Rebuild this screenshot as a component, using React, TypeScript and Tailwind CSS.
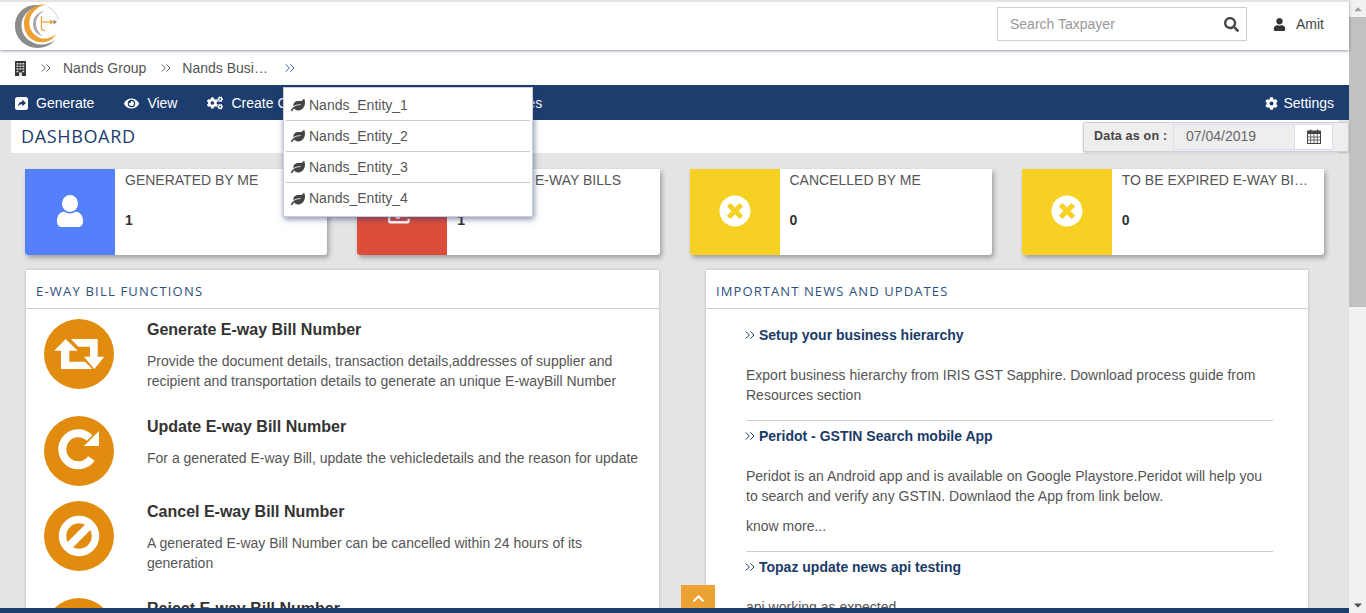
import { FaEye, FaCogs, FaCog, FaUser, FaLeaf, FaSearch, FaTimesCircle, FaChevronUp, FaCaretUp, FaCaretDown, FaRegShareSquare } from "react-icons/fa";
import { ChevronsRight } from "lucide-react";
import type { ReactNode } from "react";

function Logo() {
  return (
    <svg width="46" height="46" viewBox="0 0 46 46" className="block">
      <path d="M27 2.5 C13 0 1 9 1 23 C1 37 14 47 28 44.5 C34 43.5 38 40.5 41 37 C35 41.5 27 43 20 40 C10 36 6 27 8 18 C10 10 18 4 27 2.5Z" fill="#8c8c8c" />
      <path d="M32 1.5 C20 1 10 9 10 21 C10 33 20 41 31 39 C36 38 40 35 42 31 C37 35.5 30 37 24 34 C17 30 14 23 16 15 C18 8 25 3 32 1.5Z" fill="#eea033" />
      <path d="M30 8 C24 9 19 14 19 21 C19 27 23 31.5 28 33 C24 29 22 25 22 21 C22 15 25 11 30 8Z" fill="#a9a9a9" />
      <path d="M34 4 C39 6 43 11 44 17" fill="none" stroke="#cfcfcf" strokeWidth="1" />
      <path d="M27.5 13 V26 C27.5 27 29 27.5 31 27.5" fill="none" stroke="#eea033" strokeWidth="1.2" />
      <path d="M27.5 19 H37" fill="none" stroke="#eea033" strokeWidth="1.2" />
      <path d="M36 16.5 L40 19 L36 21.5Z" fill="#eea033" />
      <path d="M39.5 16.5 L43 19 L39.5 21.5Z" fill="#8c8c8c" />
    </svg>
  );
}

function BuildingIcon() {
  return (
    <svg width="11" height="15" viewBox="0 0 11 15" className="block shrink-0">
      <rect x="0" y="0" width="11" height="15" rx="0.5" fill="#333" />
      {[2, 4.6, 7.2].map((y) =>
        [1.5, 4.4, 7.3].map((x) => <rect key={`${x}-${y}`} x={x} y={y} width="2" height="1.5" fill="#ddd" />)
      )}
      <rect x="1.5" y="9.8" width="2" height="1.5" fill="#ddd" />
      <rect x="7.3" y="9.8" width="2" height="1.5" fill="#ddd" />
      <rect x="4" y="11.5" width="3" height="3.5" fill="#ddd" />
    </svg>
  );
}

function ShareSolid() {
  return (
    <svg width="13" height="13" viewBox="0 0 13 13" className="block shrink-0">
      <rect width="13" height="13" rx="2.5" fill="#fff" />
      <path d="M7.3 2.6 L11 6 L7.3 9.2 V7.3 C5.3 7.2 4 7.8 3 9.8 C3 6.8 4.6 4.8 7.3 4.6Z" fill="#1c3d6e" />
    </svg>
  );
}

function CalendarIcon() {
  return (
    <svg width="14" height="15" viewBox="0 0 14 15" className="block">
      <rect x="0.5" y="2" width="13" height="12.5" fill="none" stroke="#444" />
      <rect x="0.5" y="2" width="13" height="3" fill="#444" />
      <path d="M3.5 0.5 V3 M10.5 0.5 V3" stroke="#444" strokeWidth="1.4" />
      <path d="M0.5 8 H13.5 M0.5 11 H13.5 M3.7 5 V14.5 M7 5 V14.5 M10.3 5 V14.5" stroke="#444" strokeWidth="0.8" />
    </svg>
  );
}

function UserBig() {
  return (
    <svg width="26" height="32" viewBox="0 0 26 32" className="block">
      <ellipse cx="13" cy="8.5" rx="8" ry="8.5" fill="#fff" />
      <path d="M0 26 C0 20 3 17.5 7 16.5 C10.5 19 15.5 19 19 16.5 C23 17.5 26 20 26 26 C26 30 24 32 21 32 H5 C2 32 0 30 0 26Z" fill="#fff" />
    </svg>
  );
}

function RetweetIcon() {
  return (
    <svg width="70" height="70" viewBox="0 0 70 70" className="block">
      <path d="M21.7 20 L33.7 31.7 H25.3 V42.7 H41 L48.3 50 H17 V31.7 H10.3Z" fill="#fff" />
      <path d="M27 20 H53.7 V37.7 H60.3 L50.3 50 L40 37.7 H46 V27.7 H34.3Z" fill="#fff" />
    </svg>
  );
}

function RepeatIcon() {
  return (
    <svg width="70" height="70" viewBox="0 0 70 70" className="block">
      <path d="M45.6 22 A16 16 0 1 0 47.4 42.5" fill="none" stroke="#fff" strokeWidth="8" />
      <path d="M55 15 V30 H40Z" fill="#fff" />
    </svg>
  );
}

function BanIcon() {
  return (
    <svg width="70" height="70" viewBox="0 0 70 70" className="block">
      <circle cx="35" cy="35" r="16.5" fill="none" stroke="#fff" strokeWidth="7.5" />
      <path d="M23 47 L47 23" stroke="#fff" strokeWidth="7.5" />
    </svg>
  );
}

function Stat({ color, icon, title, value }: { color: string; icon: ReactNode; title: string; value: string }) {
  return (
    <div className="flex h-[86px] min-w-0 rounded-b-[3px] bg-white shadow-[2px_3px_5px_rgba(0,0,0,0.3)]">
      <div className={`flex w-[90px] shrink-0 items-center justify-center rounded-bl-[3px] pb-[3px] ${color}`}>{icon}</div>
      <div className="min-w-0 flex-1 pl-[10px] pr-[16px]">
        <div className="mt-[3px] truncate text-[14px] leading-[16px] text-[#555]">{title}</div>
        <div className="mt-[25px] text-[14px] font-bold leading-[14px] text-[#333]">{value}</div>
      </div>
    </div>
  );
}

function Fn({ icon, title, children, className }: { icon: ReactNode; title: string; children: ReactNode; className: string }) {
  return (
    <div className={`flex ${className}`}>
      <div className="ml-[18px] flex h-[70px] w-[70px] shrink-0 items-center justify-center rounded-full bg-[#e18c0e] text-white">{icon}</div>
      <div className="ml-[33px] min-w-0 flex-1">
        <div className="mt-[1px] text-[16px] font-bold leading-[20px] text-[#333]">{title}</div>
        <p className="mt-[11px] text-[14px] leading-[20px] text-[#555]">{children}</p>
      </div>
    </div>
  );
}

function News({ title, children }: { title: string; children: ReactNode }) {
  return (
    <div>
      <div className="flex items-center gap-[1px] text-[14px] font-bold leading-[20px] text-[#1a3a67]">
        <ChevronsRight size={16} strokeWidth={1.5} className="ml-[-4px] shrink-0 text-[#1c3d6e]" />
        <span>{title}</span>
      </div>
      <div className="mt-[20px] text-[14px] leading-[20px] text-[#555]">{children}</div>
    </div>
  );
}

const entities = ["Nands_Entity_1", "Nands_Entity_2", "Nands_Entity_3", "Nands_Entity_4"];

export default function App() {
  return (
    <div className="flex h-[613px] w-full overflow-hidden bg-white text-[#333]" style={{ fontFamily: '"Liberation Sans", Arial, sans-serif' }}>
      <div className="relative min-w-0 flex-1 bg-[#e4e4e4]">
        <header className="relative z-[5] flex h-[50px] items-center border-t-2 border-[#e3e3e3] bg-white pb-[4px] pl-[14px] shadow-[0_1px_3px_rgba(60,70,100,0.55)]">
          <div className="mt-[4px]"><Logo /></div>
          <div className="ml-auto flex h-[34px] w-[250px] items-center border border-[#ccd1d9] pl-[12px] pr-[7px]">
            <span className="flex-1 text-[14px] text-[#999]">Search Taxpayer</span>
            <FaSearch className="text-[15px] text-[#444]" />
          </div>
          <div className="ml-[26px] mr-[25px] flex items-center gap-[10px] text-[14px] text-[#444]">
            <FaUser className="text-[13px] text-[#333]" />
            <span>Amit</span>
          </div>
        </header>

        <div className="relative flex h-[35px] items-center bg-white pl-[15px] pt-[1px] text-[14px] text-[#555]">
          <BuildingIcon />
          <ChevronsRight size={16} strokeWidth={1.5} className="ml-[12px] shrink-0 text-[#666]" />
          <span className="ml-[9px]">Nands Group</span>
          <ChevronsRight size={16} strokeWidth={1.5} className="ml-[12px] shrink-0 text-[#666]" />
          <span className="ml-[8px] w-[87px] truncate">Nands Business</span>
          <ChevronsRight size={16} strokeWidth={1.5} className="ml-[13px] shrink-0 text-[#3f66b0]" />
        </div>

        <nav className="flex h-[35px] items-center bg-[#1c3d6e] pl-[15px] pr-[15px] pt-[1px] text-[14px] text-white">
          <ShareSolid />
          <span className="ml-[8px]">Generate</span>
          <FaEye className="ml-[30px] text-[15px]" />
          <span className="ml-[8px]">View</span>
          <FaCogs className="ml-[30px] text-[16px]" />
          <span className="ml-[8px]">Create Consolidated</span>
          <span className="ml-[138px]">Utilities</span>
          <FaCog className="ml-auto text-[13px]" />
          <span className="ml-[5px]">Settings</span>
        </nav>

        <div className="absolute left-[283px] top-[87px] z-20 w-[250px] border border-[#ccd] bg-white px-[2px] pb-[2px] pt-[2px] shadow-[1px_2px_6px_rgba(40,60,110,0.6)]">
          {entities.map((e, i) => (
            <div key={e} className={`flex h-[31px] items-center gap-[4px] pl-[5px] text-[14px] text-[#555] ${i < 3 ? "border-b border-[#ccc]" : ""}`}>
              <FaLeaf className="text-[14px] text-[#444]" />
              <span>{e}</span>
            </div>
          ))}
        </div>

        <div className="mx-[11px] flex h-[33px] items-center justify-between bg-white pl-[10px]">
          <h1 className="mb-[2px] text-[18px] leading-[24px] tracking-[0.65px] text-[#1c3d6e]" style={{ fontFamily: '"Open Sans", sans-serif' }}>DASHBOARD</h1>
          <div className="mr-[-11px] flex h-[30px] w-[266px] items-center rounded-[2px] border border-[#ccd1d9] bg-[#eee] pl-[10px] shadow-[0_1px_2px_rgba(0,0,0,0.2)]">
            <span className="w-[79px] shrink-0 text-[12.5px] font-bold tracking-[0.2px] text-[#444]">Data as on :</span>
            <div className="flex h-[26px] w-[122px] items-center border border-[#dde] pl-[12px] text-[14px] text-[#666]">07/04/2019</div>
            <div className="flex h-[26px] w-[38px] items-center justify-center border border-l-0 border-[#dde] bg-white">
              <CalendarIcon />
            </div>
          </div>
        </div>

        <div className="ml-[25px] mr-[25px] mt-[16px] grid grid-cols-4 gap-x-[30px]">
          <Stat color="bg-[#5580fb]" icon={<UserBig />} title="GENERATED BY ME" value="1" />
          <Stat color="bg-[#dc4d3c]" icon={<FaRegShareSquare className="text-[28px] text-white" />} title="REJECTED E-WAY BILLS" value="1" />
          <Stat color="bg-[#f6d023]" icon={<FaTimesCircle className="text-[32px] text-white" />} title="CANCELLED BY ME" value="0" />
          <Stat color="bg-[#f6d023]" icon={<FaTimesCircle className="text-[32px] text-white" />} title="TO BE EXPIRED E-WAY BILLS" value="0" />
        </div>

        <div className="mt-[15px] flex items-start pl-[26px]">
          <section className="h-[400px] w-[633px] shrink-0 bg-white shadow-[0_0_3px_rgba(0,0,0,0.2)]">
            <h2 className="flex h-[39px] items-center border-b border-[#ccc] pl-[10px] pt-[6px] text-[13px] tracking-[1.2px] text-[#2d4f80]" style={{ fontFamily: '"Open Sans", sans-serif' }}>E-WAY BILL FUNCTIONS</h2>
            <Fn className="mt-[10px] h-[97px] pr-[10px]" icon={<RetweetIcon />} title="Generate E-way Bill Number">Provide the document details, transaction details,addresses of supplier and recipient and transportation details to generate an unique E-wayBill Number</Fn>
            <Fn className="h-[85px] pr-[10px]" icon={<RepeatIcon />} title="Update E-way Bill Number">For a generated E-way Bill, update the vehicledetails and the reason for update</Fn>
            <Fn className="h-[97px] pr-[10px]" icon={<BanIcon />} title="Cancel E-way Bill Number">A generated E-way Bill Number can be cancelled within 24 hours of its generation</Fn>
            <Fn className="h-[85px] pr-[10px]" icon={<BanIcon />} title="Reject E-way Bill Number">Reject the E-way Bill generated by the other party</Fn>
          </section>
          <section className="ml-[47px] h-[400px] w-[602px] shrink-0 bg-white shadow-[0_0_3px_rgba(0,0,0,0.2)]">
            <h2 className="flex h-[39px] items-center border-b border-[#ccc] pl-[10px] pt-[6px] text-[13px] tracking-[1.1px] text-[#2d4f80]" style={{ fontFamily: '"Open Sans", sans-serif' }}>IMPORTANT NEWS AND UPDATES</h2>
            <div className="ml-[40px] mr-[35px] pt-[16px]">
              <News title="Setup your business hierarchy">Export business hierarchy from IRIS GST Sapphire. Download process guide from Resources section</News>
              <div className="mb-[5px] mt-[15px] border-t border-[#ccc]" />
              <News title="Peridot - GSTIN Search mobile App">
                Peridot is an Android app and is available on Google Playstore.Peridot will help you to search and verify any GSTIN. Downlaod the App from link below.
                <div className="mt-[10px]">know more...</div>
              </News>
              <div className="mb-[5px] mt-[15px] border-t border-[#ccc]" />
              <News title="Topaz update news api testing">api working as expected</News>
            </div>
          </section>
        </div>

        <button className="absolute bottom-[5px] left-[681px] z-10 flex h-[23px] w-[34px] items-start justify-center bg-[#eba232] pt-[7px] text-white">
          <FaChevronUp className="text-[13px]" />
        </button>
        <div className="absolute bottom-0 left-0 right-0 z-10 h-[5px] bg-[#1c3d6e]" />
      </div>

      <div className="flex w-[17px] shrink-0 flex-col bg-[#f1f1f1]">
        <div className="flex h-[17px] items-center justify-center text-[#a3a3a3]"><FaCaretUp className="text-[12px]" /></div>
        <div className="h-[290px] w-full bg-[#c1c1c1]" />
        <div className="mt-auto flex h-[17px] items-center justify-center text-[#505050]"><FaCaretDown className="text-[12px]" /></div>
      </div>
    </div>
  );
}
